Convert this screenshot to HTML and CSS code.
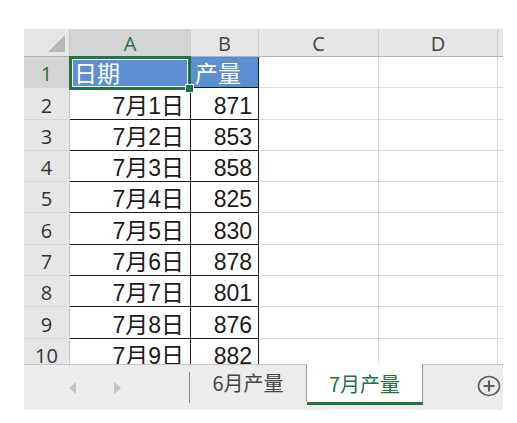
FILE: index.html
```html
<!DOCTYPE html>
<html lang="zh-CN">
<head>
<meta charset="utf-8">
<title>7月产量</title>
<link rel="stylesheet" href="styles.css">
</head>
<body>
<div class="sheet">
  <div class="grid">
    <div class="corner"><span class="tri"></span></div>
    <div class="ch sel">A</div>
    <div class="ch">B</div>
    <div class="ch">C</div>
    <div class="ch">D</div>
    <div class="ch end"></div>

    <div class="rh sel">1</div>
    <div class="c fill t b1 first">日期</div>
    <div class="c fill t b1">产量</div>
    <div class="c"></div><div class="c"></div><div class="c end"></div>

    <div class="rh">2</div><div class="c t r first">7月1日</div><div class="c t r">871</div><div class="c"></div><div class="c"></div><div class="c end"></div>
    <div class="rh">3</div><div class="c t r first">7月2日</div><div class="c t r">853</div><div class="c"></div><div class="c"></div><div class="c end"></div>
    <div class="rh">4</div><div class="c t r first">7月3日</div><div class="c t r">858</div><div class="c"></div><div class="c"></div><div class="c end"></div>
    <div class="rh">5</div><div class="c t r first">7月4日</div><div class="c t r">825</div><div class="c"></div><div class="c"></div><div class="c end"></div>
    <div class="rh">6</div><div class="c t r first">7月5日</div><div class="c t r">830</div><div class="c"></div><div class="c"></div><div class="c end"></div>
    <div class="rh">7</div><div class="c t r first">7月6日</div><div class="c t r">878</div><div class="c"></div><div class="c"></div><div class="c end"></div>
    <div class="rh">8</div><div class="c t r first">7月7日</div><div class="c t r">801</div><div class="c"></div><div class="c"></div><div class="c end"></div>
    <div class="rh">9</div><div class="c t r first">7月8日</div><div class="c t r">876</div><div class="c"></div><div class="c"></div><div class="c end"></div>
    <div class="rh">10</div><div class="c t r first">7月9日</div><div class="c t r">882</div><div class="c"></div><div class="c"></div><div class="c end"></div>

    <div class="selbox"><span class="handle"></span></div>
  </div>

  <div class="tabbar">
    <div class="nav">
      <span class="arrow left"></span>
      <span class="arrow right"></span>
    </div>
    <div class="sep"></div>
    <div class="tab">6月产量</div>
    <div class="tab active">7月产量</div>
    <div class="spacer"></div>
    <div class="add">
      <svg width="24" height="22" viewBox="0 0 24 22">
        <ellipse cx="12" cy="11" rx="10.5" ry="9.5" fill="none" stroke="#5a5a5a" stroke-width="1.6"/>
        <path d="M12 5.5v11M6.5 11h11" stroke="#5a5a5a" stroke-width="2.2" fill="none"/>
      </svg>
    </div>
  </div>
</div>
</body>
</html>
```

FILE: styles.css
```css
html, body {
  margin: 0;
  padding: 0;
  background: #ffffff;
}

.sheet {
  padding: 29px 0 0 24px;
  width: 479px;
}

.grid {
  position: relative;
  display: grid;
  grid-template-columns: 46px 121px 68px 120px 119px 6px;
  grid-template-rows: 28px repeat(10, 31.3px);
  height: 335px;
  overflow: hidden;
  font-family: "Liberation Sans", "Noto Sans CJK SC", sans-serif;
}

.corner {
  position: relative;
  background: #e6e6e6;
  border-right: 1px solid #c8c8c8;
  border-bottom: 1px solid #b4b4b4;
}

.tri {
  position: absolute;
  right: 4px;
  bottom: 4px;
  width: 0;
  height: 0;
  border-left: 17px solid transparent;
  border-bottom: 17px solid #b9b9b9;
}

.ch {
  background: #e6e6e6;
  border-right: 1px solid #cfcfcf;
  border-bottom: 1px solid #b4b4b4;
  display: flex;
  align-items: center;
  justify-content: center;
  font-family: "Open Sans", "Noto Sans", sans-serif;
  font-size: 20px;
  line-height: 1;
  color: #444444;
  padding-top: 2px;
  box-sizing: border-box;
}

.ch.sel {
  background: #d4d4d4;
  color: #217346;
}

.ch.end {
  border-right: none;
}

.rh {
  background: #e6e6e6;
  border-right: 1px solid #c8c8c8;
  border-bottom: 1px solid #d6d6d6;
  display: flex;
  align-items: flex-end;
  justify-content: center;
  padding-bottom: 3px;
  box-sizing: border-box;
  font-family: "Open Sans", "Noto Sans", sans-serif;
  font-size: 20px;
  line-height: 1;
  color: #333333;
}

.rh.sel {
  background: #d4d4d4;
  color: #217346;
}

.c {
  border-right: 1px solid #d9d9d9;
  border-bottom: 1px solid #d9d9d9;
  box-sizing: border-box;
  display: flex;
  align-items: flex-end;
  padding: 0 6px 1px 4px;
  font-size: 23px;
  line-height: 1;
  color: #1a1a1a;
  white-space: nowrap;
  overflow: hidden;
}

.c.end {
  border-right: none;
}

.c.t {
  border-right: 1px solid #1a1a1a;
  border-bottom: 1px solid #1a1a1a;
}

.c.r {
  justify-content: flex-end;
}

.c.fill {
  background: #5b8fd1;
  color: #ffffff;
  padding-left: 4px;
}

.selbox {
  position: absolute;
  left: 45px;
  top: 27px;
  width: 122px;
  height: 34px;
  box-sizing: border-box;
  border: 3px solid #217346;
  box-shadow: inset 0 0 0 1px #ffffff;
  pointer-events: none;
}

.handle {
  position: absolute;
  right: -6px;
  bottom: -6px;
  width: 7px;
  height: 7px;
  background: #217346;
  border: 1px solid #ffffff;
}

.tabbar {
  display: flex;
  align-items: stretch;
  height: 46px;
  background: #ececec;
  border-top: 1px solid #c6c6c6;
  box-sizing: border-box;
  font-family: "Noto Sans CJK SC", sans-serif;
  font-size: 20px;
  color: #444444;
}

.nav {
  width: 165px;
  display: flex;
  align-items: center;
  padding-left: 45px;
  gap: 38px;
  box-sizing: border-box;
}

.arrow {
  width: 0;
  height: 0;
  border-top: 6px solid transparent;
  border-bottom: 6px solid transparent;
}

.arrow.left {
  border-right: 7px solid #c4c4c4;
}

.arrow.right {
  border-left: 7px solid #c4c4c4;
}

.sep {
  width: 1px;
  margin: 7px 0 7px 0;
  background: #8a8a8a;
}

.tab {
  width: 117px;
  display: flex;
  align-items: center;
  justify-content: center;
  padding-bottom: 2px;
  box-sizing: border-box;
  border-right: 1px solid #9a9a9a;
  margin-bottom: 8px;
}

.tab.active {
  width: 116px;
  background: #ffffff;
  color: #217346;
  margin-top: -1px;
  border-bottom: 3px solid #217346;
  margin-bottom: 5px;
  padding-bottom: 0;
}

.spacer {
  flex: 1;
}

.add {
  display: flex;
  align-items: center;
  padding-right: 2px;
  padding-bottom: 3px;
}
```
